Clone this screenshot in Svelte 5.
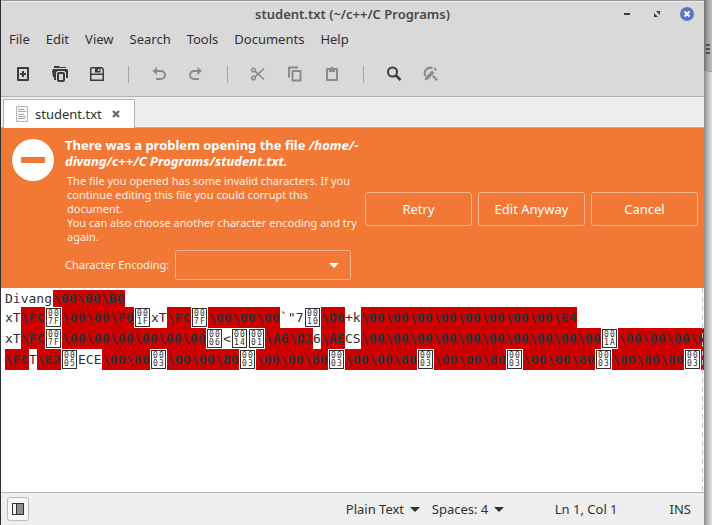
<script>
  const menus = ['File', 'Edit', 'View', 'Search', 'Tools', 'Documents', 'Help'];
  const CELL = 8;

  const esc = (codes) => codes.split(' ').map((c) => ({ kind: 'esc', text: '\\' + c }));
  const plain = (text) => ({ kind: 'plain', text });
  const box = (hex) => ({ kind: 'box', text: hex });
  const cut = (text) => ({ kind: 'esc', text });
  const zeros = (n) => Array(n).fill('00').join(' ');
  const group = [esc('00 00 80'), box('0003')];

  const lines = [
    [plain('Divang'), esc('00 00 B0')],
    [
      plain('xT'), esc('FC'), box('007F'), esc('00 00 F0'), box('001F'), plain('xT'), esc('FC'),
      box('007F'), esc('00 00 00'), plain('`"7'), box('0010'), esc('D6'), plain('+k'),
      esc(zeros(8) + ' E4')
    ],
    [
      plain('xT'), esc('FC'), box('007F'), esc(zeros(6)), box('0006'), plain('<'), box('0014'),
      box('0001'), esc('A6 D1'), plain('6'), esc('AE'), plain('CS'), esc(zeros(10)), box('001A'),
      esc(zeros(3)), cut('\\0')
    ],
    [
      esc('FC'), plain('T'), esc('E2'), box('0005'), plain('ECE'), esc('00 80'), box('0003'),
      group, group, group, group, group, group, cut('\\')
    ]
  ].map((line) => line.flat(2));
</script>

<div class="desktop">
  <main class="window">
    <header class="chrome">
      <div class="titlebar">
        <h1>student.txt (~/c++/C Programs)</h1>
        <div class="controls">
          <button aria-label="Minimize">
            <svg width="14" height="14"><path d="M4 6h6v2H4z" fill="#3c3c3c" /></svg>
          </button>
          <button aria-label="Maximize">
            <svg width="14" height="14"><path d="M6 4h4v4zM4 6v4h4z" fill="#3c3c3c" /></svg>
          </button>
          <button aria-label="Close">
            <svg width="14" height="14"><circle cx="7" cy="7" r="7" fill="#5b73c9" /><path d="M4.500 4.500l5 5m0-5l-5 5" stroke="#fff" stroke-width="2" /></svg>
          </button>
        </div>
      </div>
      <nav class="menubar">
        {#each menus as m}<button>{m}</button>{/each}
      </nav>
      <div class="toolbar">
        <button aria-label="New">
          <svg viewBox="0 0 16 16"><path d="M3 2h10v12H3z" fill="none" stroke="#3c3c3c" stroke-width="2" stroke-linejoin="round" /><path d="M7 5h2v2h2v2H9v2H7V9H5V7h2z" fill="#3c3c3c" /></svg>
        </button>
        <button aria-label="Open">
          <svg viewBox="0 0 16 16"><path d="M2 0h5l1 1h6v1H2z" fill="#3c3c3c" /><path d="M1 3h14l1 1v8h-2V6.500L12.500 5h-7L4 6.500V14H2V11H1L0 5z" fill="#3c3c3c" /><rect x="6" y="7" width="6" height="8" rx="1" fill="none" stroke="#3c3c3c" stroke-width="2" /></svg>
        </button>
        <button aria-label="Save">
          <svg viewBox="0 0 16 16"><path fill-rule="evenodd" d="M2 1h11l2 2v12H1V2zM2.500 2.500v5h11V3.500l-1-1h-1v4H6v-4zM9 3h1.500v2H9zM2.500 9v4.500h11V9z" fill="#3c3c3c" /></svg>
        </button>
        <i></i>
        <button aria-label="Undo" disabled>
          <svg viewBox="0 0 16 16"><path d="M3 5h7a4 4 0 0 1 0 8H5" fill="none" stroke="#8b8b8b" stroke-width="2" /><path d="M6 1v8L1.500 5z" fill="#8b8b8b" /></svg>
        </button>
        <button aria-label="Redo" disabled>
          <svg viewBox="0 0 16 16"><path d="M12 5H6a4 4 0 0 0 0 8h5" fill="none" stroke="#8b8b8b" stroke-width="2" /><path d="M9.500 1v8L14 5z" fill="#8b8b8b" /></svg>
        </button>
        <i></i>
        <button aria-label="Cut" disabled>
          <svg viewBox="0 0 16 16" fill="none" stroke="#8b8b8b"><circle cx="3.500" cy="4" r="1.800" stroke-width="1.500" /><circle cx="3.500" cy="12" r="1.800" stroke-width="1.500" /><path d="M5 5.200L14 13.500M5 10.800L14 2.500" stroke-width="1.700" /></svg>
        </button>
        <button aria-label="Copy" disabled>
          <svg viewBox="0 0 16 16" fill="none" stroke="#8b8b8b"><path d="M2 11.500V1.500h9" stroke-width="2" /><path d="M5.500 5h8v9.500h-8z" stroke-width="2" stroke-linejoin="round" /></svg>
        </button>
        <button aria-label="Paste" disabled>
          <svg viewBox="0 0 16 16"><path d="M3 3h10v11H3z" fill="none" stroke="#8b8b8b" stroke-width="2" stroke-linejoin="round" /><path fill-rule="evenodd" d="M5 2h1.500a1.500 1.500 0 0 1 3 0H11v4H5zM7.500 1.800h1v1h-1z" fill="#8b8b8b" /></svg>
        </button>
        <i></i>
        <button aria-label="Find">
          <svg viewBox="0 0 16 16" fill="none" stroke="#3c3c3c"><circle cx="6.500" cy="6" r="4.500" stroke-width="2" /><path d="M9.500 9l5 5" stroke-width="2.500" /></svg>
        </button>
        <button aria-label="Find and replace" disabled>
          <svg viewBox="0 0 16 16"><path d="M2.500 10A5.500 5.500 0 0 1 9.500 2.200" fill="none" stroke="#8b8b8b" stroke-width="2" /><path d="M1.500 14.500l1-3.500L9 4.500 11.500 7 5 13.500zM10.500 3l1.500-1.500L14 3.500 12.500 5zM9 10.500l1.500-1.500 4.500 4.500-1.500 1.500z" fill="#8b8b8b" /></svg>
        </button>
      </div>
    </header>

    <div class="tabs">
      <div class="tab">
        <svg width="12" height="16"><path d="M.5.5h11v15H.5z" fill="#f8f8f8" stroke="#b5b5b5" /><path d="M2 3.500h6M2 5.500h8M2 8.500h6M2 10.500h8M2 12.500h7" stroke="#a9a9a9" /></svg>
        <span>student.txt</span>
        <button aria-label="Close tab">
          <svg width="8" height="8"><path d="M1 1l6 6m0-6L1 7" stroke="#6a6a6a" stroke-width="2.400" /></svg>
        </button>
      </div>
    </div>

    <section class="infobar" role="alert">
      <svg class="stop" width="42" height="42"><circle cx="21" cy="21" r="21" fill="#fff" /><path d="M9 18h24v6H9z" fill="#f27835" /></svg>
      <div class="message">
        <h2>There was a problem opening the file <em>/home/-<br />divang/c++/C Programs/student.txt.</em></h2>
        <p>
          The file you opened has some invalid characters. If you<br />continue editing this file you could corrupt this<br />document.<br />You can also choose another character encoding and try<br />again.
        </p>
        <div class="encoding">
          <label for="enc">Character Encoding:</label>
          <div class="combo">
            <select id="enc"><option value="" label=" "></option></select>
            <svg width="10" height="5"><path d="M0 0h10L5 5z" fill="#fff" /></svg>
          </div>
        </div>
      </div>
      <div class="actions">
        <button>Retry</button>
        <button>Edit Anyway</button>
        <button>Cancel</button>
      </div>
    </section>

    <div class="editor">
      {#each lines as line}
        <div class="line">
          {#each line as t}
            {#if t.kind === 'box'}
              <span class="hex"><span>{#each t.text as d}<b>{d}</b>{/each}</span></span>
            {:else}
              <span class={t.kind} style:width="{t.text.length * CELL}px">{t.text}</span>
            {/if}
          {/each}
        </div>
      {/each}
    </div>

    <footer class="status">
      <button class="panel" aria-label="Side panel">
        <svg width="12" height="12"><path d="M0 0h12v12H0z" fill="#303030" /><path d="M1 1h3v10H1z" fill="#f2f2f2" /><path d="M5 1h6v10H5z" fill="#8f8f8f" /></svg>
      </button>
      <div class="pick">
        <select aria-label="Language"><option>Plain Text</option></select>
        <svg width="10" height="5"><path d="M0 0h10L5 5z" fill="#303030" /></svg>
      </div>
      <div class="pick">
        <select aria-label="Tab width"><option>Spaces: 4</option></select>
        <svg width="10" height="5"><path d="M0 0h10L5 5z" fill="#303030" /></svg>
      </div>
      <span class="pos">Ln 1, Col 1</span>
      <span>INS</span>
    </footer>
  </main>
  <aside class="behind">
    <div class="behind-head">
      <svg width="4" height="10"><path d="M0 0h4v2H0zM0 4h4v2H0zM0 8h4v2H0z" fill="#555" /></svg>
    </div>
  </aside>
</div>

<style>
  :global(body) { margin: 0; }
  .desktop {
    display: flex;
    box-sizing: border-box;
    height: 100vh;
    padding-left: 1px;
    background: #2b2f33;
    font: 13px/18px 'Noto Sans', sans-serif;
    color: #303030;
    overflow: hidden;
  }
  button, select {
    appearance: none;
    margin: 0;
    padding: 0;
    border: 0;
    background: none;
    font: inherit;
    color: inherit;
  }
  svg { display: block; flex: none; }
  .window {
    display: flex;
    flex: 1;
    flex-direction: column;
    min-width: 0;
    background: #fff;
  }
  .chrome {
    background: #d9d9d9;
    border-top: 1px solid #999;
    border-bottom: 1px solid #b4b4b4;
    box-shadow: inset 0 1px #eee;
  }
  .titlebar {
    display: flex;
    align-items: center;
    justify-content: center;
    position: relative;
    height: 25px;
  }
  h1 { margin: 0; font-size: 13px; font-weight: 600; color: #484848; }
  .controls { display: flex; gap: 16px; position: absolute; right: 10px; }
  .menubar { display: flex; gap: 16px; height: 26px; padding: 0 8px; }
  .toolbar { display: flex; align-items: center; height: 44px; padding-left: 14px; }
  .toolbar button { width: 17px; margin-right: 20px; }
  .toolbar button svg { width: 16px; height: 16px; }
  .toolbar i { width: 1px; height: 17px; margin: 0 22px 0 2px; background: #a6a6a6; }
  .tabs {
    display: flex;
    height: 28px;
    padding: 2px 2px 0;
    background: #efefef;
    border-bottom: 1px solid #b4b4b4;
  }
  .tab {
    display: flex;
    align-items: center;
    height: 28px;
    padding: 0 14px 0 12px;
    background: #fff;
    border: 1px solid #b4b4b4;
    border-bottom: 0;
  }
  .tab span { margin: 0 10px 0 7px; }
  .infobar {
    display: flex;
    align-items: center;
    gap: 11px;
    padding: 9px 6px 8px 11px;
    background: #f27835;
    color: #fff;
  }
  .stop { align-self: flex-start; margin-top: 2px; }
  .message { flex: 1; min-width: 0; white-space: nowrap; }
  h2 { margin: 0; font-size: 13px; line-height: 16px; font-weight: 700; }
  p { margin: 5px 0 6px 2px; font-size: 11px; line-height: 14px; color: #fff0e8; }
  .encoding {
    display: flex;
    align-items: center;
    gap: 6px;
    padding-right: 3px;
    font-size: 11px;
    color: #fff0e8;
  }
  .combo { flex: 1; position: relative; }
  .combo select {
    display: block;
    box-sizing: border-box;
    width: 100%;
    height: 30px;
    padding: 0 24px 0 8px;
    border: 1px solid #f8b48e;
    border-radius: 3px;
  }
  .combo svg { position: absolute; right: 12px; top: 13px; pointer-events: none; }
  .actions { display: flex; gap: 6px; }
  .actions button {
    box-sizing: border-box;
    width: 107px;
    height: 34px;
    border: 1px solid #f8b48e;
    border-radius: 3px;
  }
  .editor {
    flex: 1;
    position: relative;
    padding: 2px 0 0 4px;
    overflow: hidden;
    font: 13px/17px 'DejaVu Sans Mono', monospace;
  }
  .editor::after {
    content: '';
    position: absolute;
    top: 0;
    bottom: 0;
    right: 1px;
    width: 1px;
    background: repeating-linear-gradient(#c4c4c4 0 5px, transparent 5px 9px);
  }
  .line { display: flex; white-space: pre; }
  .line:not(:first-child) { line-height: 21px; }
  .line > span { flex: none; }
  .esc { background: #c00; color: #2e3436; font-weight: 700; }
  .hex { box-sizing: border-box; width: 17px; height: 21px; padding: 1px; }
  .hex span {
    display: grid;
    grid-template-columns: 6px 6px;
    grid-auto-rows: 8px;
    place-content: center;
    justify-items: center;
    box-sizing: border-box;
    height: 19px;
    border: 1px solid #303030;
  }
  .hex b { font-size: 8px; line-height: 8px; font-weight: 400; }
  .status {
    display: flex;
    align-items: center;
    height: 32px;
    padding: 0 13px 0 6px;
    background: #efefef;
    border-top: 1px solid #b4b4b4;
  }
  .panel {
    display: grid;
    place-items: center;
    width: 22px;
    height: 24px;
    margin-right: auto;
    border: 1px solid #bcbcbc;
    border-radius: 3px;
    background: #f7f7f7;
    box-sizing: border-box;
  }
  .pick { display: flex; align-items: center; gap: 5px; margin-right: 12px; }
  .pos { margin: 0 52px 0 39px; }
  .behind {
    width: 8px;
    background: linear-gradient(90deg, #8a8a8a, #b4b4b4 3px, #e2e2e2);
  }
  .behind-head {
    display: flex;
    align-items: flex-start;
    box-sizing: border-box;
    height: 72px;
    padding: 44px 0 0 2px;
    background: linear-gradient(90deg, #6e6e6e, #9a9a9a 3px, #c2c2c2);
    border-bottom: 1px solid #999;
  }
</style>
